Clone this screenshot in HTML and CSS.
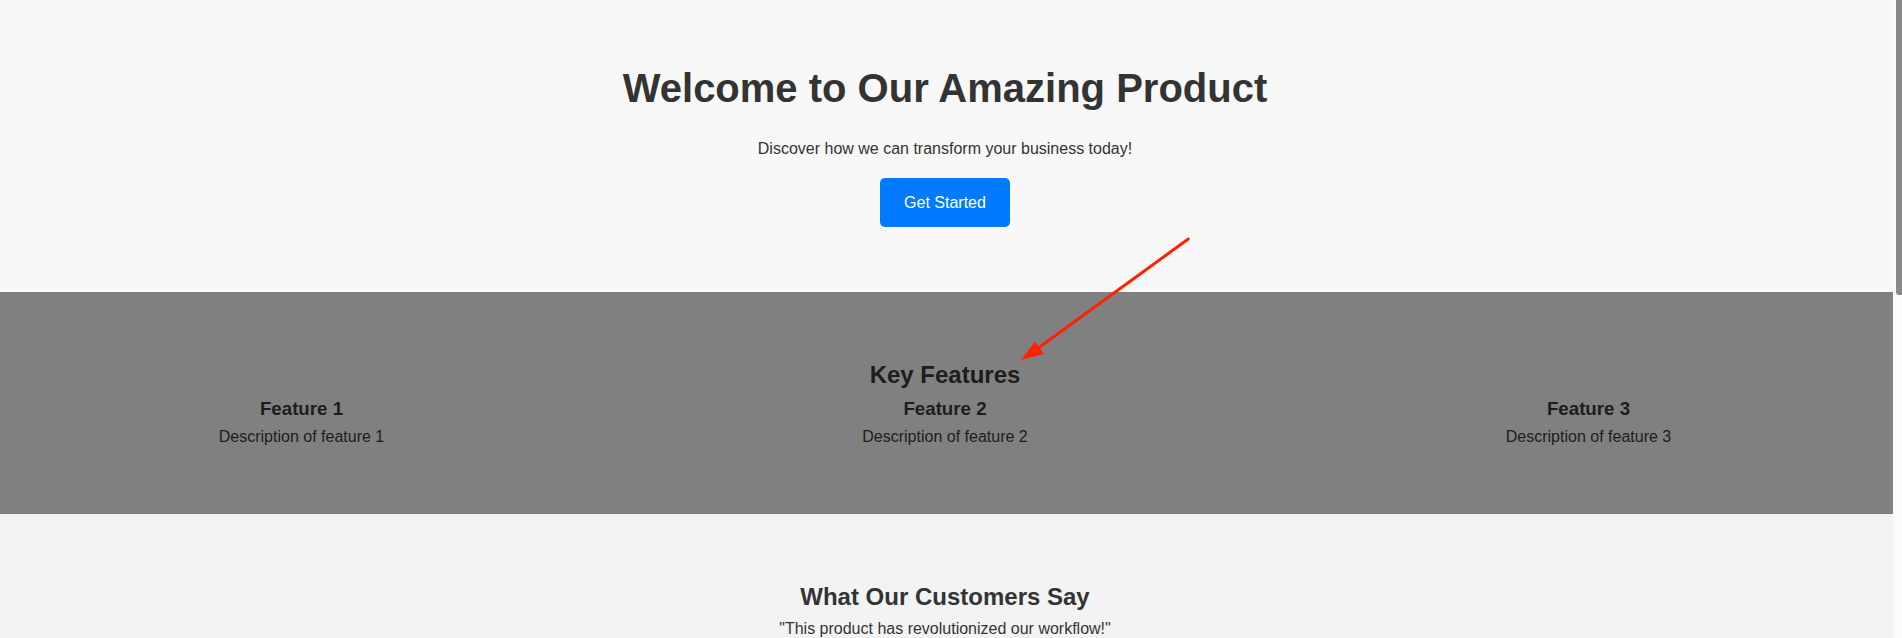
FILE: index.html
```html
<!DOCTYPE html>
<html lang="en">
<head>
<meta charset="utf-8">
<title>Amazing Product</title>
<link rel="stylesheet" href="styles.css">
</head>
<body>
  <main class="page">
    <section class="hero">
      <h1 class="hero-title">Welcome to Our Amazing Product</h1>
      <p class="hero-text">Discover how we can transform your business today!</p>
      <a class="btn" href="#">Get Started</a>
    </section>

    <section class="features">
      <h2 class="section-title features-title">Key Features</h2>
      <div class="feature-row">
        <div class="feature">
          <h3 class="feature-title">Feature 1</h3>
          <p class="feature-text">Description of feature 1</p>
        </div>
        <div class="feature">
          <h3 class="feature-title">Feature 2</h3>
          <p class="feature-text">Description of feature 2</p>
        </div>
        <div class="feature">
          <h3 class="feature-title">Feature 3</h3>
          <p class="feature-text">Description of feature 3</p>
        </div>
      </div>
    </section>

    <section class="testimonials">
      <h2 class="section-title testimonials-title">What Our Customers Say</h2>
      <p class="quote">"This product has revolutionized our workflow!"</p>
      <p class="quote">"Amazing support and easy to use."</p>
      <p class="quote">"We saw results within the first week."</p>
    </section>

    <footer class="footer">
      <p class="footer-text">&copy; 2024 Our Amazing Product. All rights reserved.</p>
    </footer>
  </main>

  <div class="scrollbar" aria-hidden="true"><div class="scrollbar-thumb"></div></div>

  <svg class="annotation" width="190" height="140" viewBox="0 0 190 140" aria-hidden="true">
    <line x1="178.3" y1="9" x2="29" y2="117.5" stroke="#ff2200" stroke-width="3" stroke-linecap="round"/>
    <polygon points="10.7,130 25,111.7 34,124" fill="#ff2200"/>
  </svg>
</body>
</html>
```

FILE: styles.css
```css
html {
  background: #fbfbfb;
}

::-webkit-scrollbar {
  display: none;
}

body {
  margin: 0;
  font-family: "Liberation Sans", Arial, sans-serif;
  color: #333;
  position: relative;
}

.page {
  margin-right: 9px;
  background: #f3f3f3;
}

.hero {
  background: #f8f8f8;
  text-align: center;
  padding: 65px 3px 65px 0;
}

.hero-title {
  margin: 0 0 29px;
  font-size: 40px;
  line-height: 46px;
  font-weight: bold;
  color: #333;
}

.hero-text {
  margin: 0 0 19.5px;
  font-size: 16px;
  line-height: 18.4px;
}

.btn {
  display: inline-block;
  vertical-align: top;
  background: #007bff;
  color: #fff;
  text-decoration: none;
  font-size: 16px;
  line-height: 19px;
  padding: 15px 24px;
  border-radius: 5px;
}

.features {
  background: #808080;
  color: #1d1d1d;
  text-align: center;
  padding: 49px 3px 48px 0;
  height: 222px;
  box-sizing: border-box;
}

.section-title {
  margin: 20px 0 9px;
  font-size: 24px;
  line-height: 27.6px;
  font-weight: bold;
}

.feature-row {
  display: flex;
  justify-content: space-between;
}

.feature {
  width: 603px;
}

.feature-title {
  margin: 0 0 9px;
  font-size: 18.72px;
  line-height: 21.5px;
  font-weight: bold;
}

.feature-text {
  margin: 0;
  font-size: 16px;
  line-height: 18.4px;
}

.testimonials {
  background: #f3f3f3;
  text-align: center;
  padding: 49px 3px 48px 0;
  height: 700px;
  box-sizing: border-box;
}

.testimonials-title {
  margin-bottom: 9px;
  color: #333;
}

.quote {
  margin: 0 0 16px;
  font-size: 16px;
  line-height: 18.4px;
  color: #333;
}

.footer {
  background: #333;
  color: #fff;
  text-align: center;
  height: 166px;
  display: flex;
  align-items: center;
  justify-content: center;
}

.footer-text {
  margin: 0;
  font-size: 14px;
}

.scrollbar {
  position: fixed;
  top: 0;
  right: 0;
  width: 9px;
  height: 100vh;
  background: #fbfbfb;
}

.scrollbar-thumb {
  margin-left: 3px;
  height: 295px;
  background: #8a8a8a;
  border-radius: 0 0 0 3px;
}

.annotation {
  position: absolute;
  left: 1010px;
  top: 230px;
}
```
